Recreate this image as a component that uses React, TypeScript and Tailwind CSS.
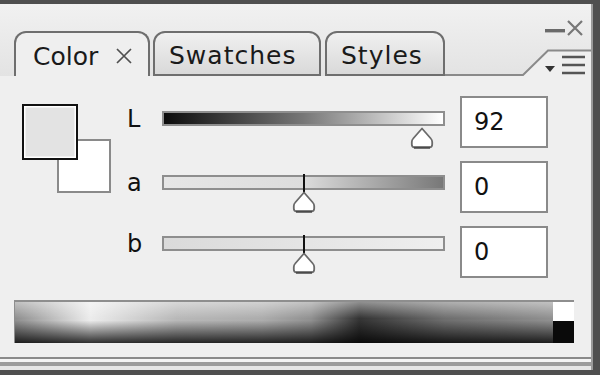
import React from "react";

const ui = "font-['DejaVu_Sans',sans-serif]";

const rows = [
  {
    label: "L",
    value: "92",
    pos: "left-[92%]",
    bar: "bg-[linear-gradient(to_right,#0c0c0c,#777777_50%,#ffffff)]",
    top: "pt-[15px]",
    marker: false,
  },
  {
    label: "a",
    value: "0",
    pos: "left-[50%]",
    bar: "bg-[linear-gradient(to_right,#e6e6e6,#dcdcdc_50%,#787878)]",
    top: "pt-[14px]",
    marker: true,
  },
  {
    label: "b",
    value: "0",
    pos: "left-[50%]",
    bar: "bg-[linear-gradient(to_right,#dadada,#efefef)]",
    top: "pt-[10px]",
    marker: true,
  },
];

function Thumb() {
  return (
    <svg width="24" height="22" viewBox="0 0 24 22">
      <path
        d="M12 1.5 L20.8 11.5 Q22.2 13 22.2 15 V17.5 Q22.2 20.3 19.5 20.3 H4.5 Q1.8 20.3 1.8 17.5 V15 Q1.8 13 3.2 11.5 Z"
        fill="#ffffff"
        stroke="#6a6a6a"
        strokeWidth="1.8"
        strokeLinejoin="round"
      />
      <path d="M4 20.6 H20" stroke="#4a4a4a" strokeWidth="2.2" />
    </svg>
  );
}

function SliderRow({ row }: { row: (typeof rows)[number] }) {
  return (
    <div className="flex h-[52px]">
      <div className={`flex w-[318px] items-start ${row.top}`}>
        <span className="flex h-[15px] w-[35px] items-center text-[24px] leading-none text-[#111]">
          {row.label}
        </span>
        <div className="relative w-[283px]">
          <div className={`h-[15px] border-2 border-[#8e8e8e] ${row.bar}`} />
          {row.marker && (
            <div className={`absolute top-[-1px] h-[19px] w-[2px] -translate-x-1/2 bg-[#111] ${row.pos}`} />
          )}
          <div className="relative h-[22px]">
            <div className={`absolute top-[1px] -translate-x-1/2 ${row.pos}`}>
              <Thumb />
            </div>
          </div>
        </div>
      </div>
      <div className="ml-[15px] flex h-[52px] w-[88px] items-center border-2 border-[#8a8a8a] bg-white pl-[12px] text-[24px] leading-none text-[#111]">
        {row.value}
      </div>
    </div>
  );
}

export default function App() {
  return (
    <div className={`flex h-[375px] w-[600px] flex-col overflow-hidden bg-[#4f4f4f] pt-[4px] ${ui}`}>
      <div className="flex w-[593px] flex-col border-r-2 border-[#9a9a9a] bg-[#efefef]">
        {/* tab strip */}
        <div className="flex h-[72px] items-end bg-[linear-gradient(to_bottom,#f1f1f1,#e3e3e3)] pl-[14px]">
          <div className="flex h-[45px] w-[136px] items-center rounded-t-[12px] border-2 border-b-0 border-[#6e6e6e] bg-[#efefef] pl-[17px] pt-[3px]">
            <span className="text-[25px] leading-none text-[#1a1a1a]">Color</span>
            <svg className="ml-[16px]" width="20" height="20" viewBox="0 0 20 20">
              <path d="M3 3 L17 17 M17 3 L3 17" stroke="#505050" strokeWidth="1.7" />
            </svg>
          </div>
          <div className="ml-[3px] flex h-[45px] w-[168px] items-center rounded-t-[12px] border-2 border-[#6e6e6e] bg-[linear-gradient(to_bottom,#f0f0f0,#d9d9d9)] pl-[14px] pt-[3px]">
            <span className="text-[25px] leading-none tracking-[1px] text-[#1a1a1a]">Swatches</span>
          </div>
          <div className="ml-[4px] flex h-[45px] w-[120px] items-center rounded-t-[12px] border-2 border-[#6e6e6e] bg-[linear-gradient(to_bottom,#f0f0f0,#d9d9d9)] pl-[14px] pt-[3px]">
            <span className="text-[25px] leading-none tracking-[1px] text-[#1a1a1a]">Styles</span>
          </div>
          <div className="relative flex-1 self-stretch">
            <svg className="absolute inset-0" width="146" height="72" viewBox="0 0 146 72">
              <polygon points="78,72 103,46 146,46 146,72" fill="#efefef" />
              <polyline points="0,71 78,71 103,46.5 146,46.5" fill="none" stroke="#8a8a8a" strokeWidth="2" />
              <rect x="100" y="25" width="20" height="3.4" fill="#6a6a6a" />
              <path d="M123 17 L137 31 M137 17 L123 31" stroke="#777777" strokeWidth="2.2" />
              <polygon points="100,62 110,62 105,68" fill="#333333" />
              <path d="M117 53 H140 M117 61 H140 M117 69 H140" stroke="#555555" strokeWidth="2.5" />
            </svg>
          </div>
        </div>

        {/* content */}
        <div className="flex h-[281px] flex-col">
          <div className="flex pl-[22px] pt-[20px]">
            <div className="relative mt-[8px] h-[90px] w-[90px]">
              <div className="absolute left-[35px] top-[35px] h-[54px] w-[54px] border-2 border-[#8a8a8a] bg-white" />
              <div className="absolute left-0 top-0 h-[56px] w-[56px] border-2 border-[#111] bg-[#e3e3e3] shadow-[inset_0_0_0_1.5px_#ffffff]" />
            </div>
            <div className="ml-[15px] flex flex-col gap-[13px]">
              {rows.map((r) => (
                <SliderRow key={r.label} row={r} />
              ))}
            </div>
          </div>

          <div className="ml-[14px] mt-[22px] flex h-[43px] w-[560px] border-l border-t-2 border-[#8e8e8e]">
            <div className="flex-1 bg-[image:linear-gradient(to_bottom,rgba(255,255,255,0.45),rgba(255,255,255,0)_40%,rgba(0,0,0,0)_45%,rgba(0,0,0,0.8)),linear-gradient(to_right,#8e8e8e,#ececec_14%,#b8b8b8_30%,#acacac_46%,#909090_55%,#333333_64%,#6e6e6e_80%,#909090)]" />
            <div className="flex w-[21px] flex-col">
              <div className="h-[19px] bg-white" />
              <div className="flex-1 bg-[#0a0a0a]" />
            </div>
          </div>
        </div>

        {/* bottom edge */}
        <div className="h-[2px] bg-[#8a8a8a]" />
        <div className="h-[3px] bg-[#f4f4f4]" />
        <div className="h-[4px] bg-[#9c9c9c]" />
        <div className="h-[4px] bg-[#e6e6e6]" />
      </div>
    </div>
  );
}
